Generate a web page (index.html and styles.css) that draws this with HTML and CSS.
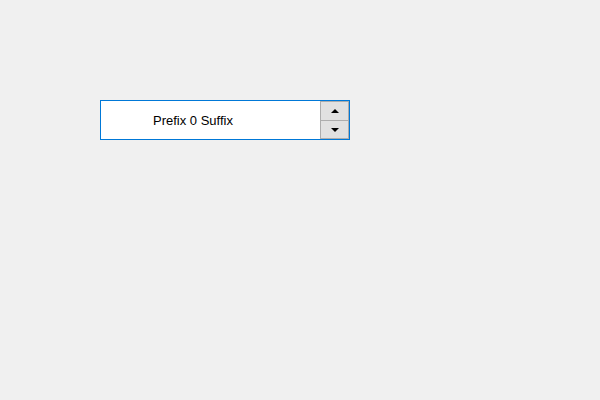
FILE: index.html
```html
<!DOCTYPE html>
<html>
<head>
<meta charset="utf-8">
<link rel="stylesheet" href="styles.css">
</head>
<body>
<div class="spin">
  <div class="value">Prefix 0 Suffix</div>
  <div class="buttons">
    <div class="btn up"><span class="arrow-up"></span></div>
    <div class="btn down"><span class="arrow-down"></span></div>
  </div>
</div>
</body>
</html>
```
FILE: styles.css
```css
html, body {
  margin: 0;
  background: #f0f0f0;
  width: 600px;
  height: 400px;
}
body {
  padding: 100px 0 0 100px;
  box-sizing: border-box;
  font-family: "Liberation Sans", Arial, sans-serif;
}
.spin {
  width: 250px;
  height: 40px;
  box-sizing: border-box;
  border: 1px solid #0078d7;
  background: #fff;
  display: flex;
}
.value {
  flex: 1;
  display: flex;
  align-items: center;
  padding-left: 52px;
  padding-top: 1px;
  font-size: 13px;
  color: #000;
}
.buttons {
  width: 29px;
  display: flex;
  flex-direction: column;
}
.btn {
  box-sizing: border-box;
  background: #e1e1e1;
  border: 1px solid #adadad;
  display: flex;
  align-items: center;
  justify-content: center;
}
.up {
  height: 20px;
}
.down {
  height: 18px;
  border-top: none;
}
.arrow-up {
  width: 0;
  height: 0;
  border-left: 4px solid transparent;
  border-right: 4px solid transparent;
  border-bottom: 4px solid #000;
}
.arrow-down {
  width: 0;
  height: 0;
  border-left: 4px solid transparent;
  border-right: 4px solid transparent;
  border-top: 4px solid #000;
}
```
